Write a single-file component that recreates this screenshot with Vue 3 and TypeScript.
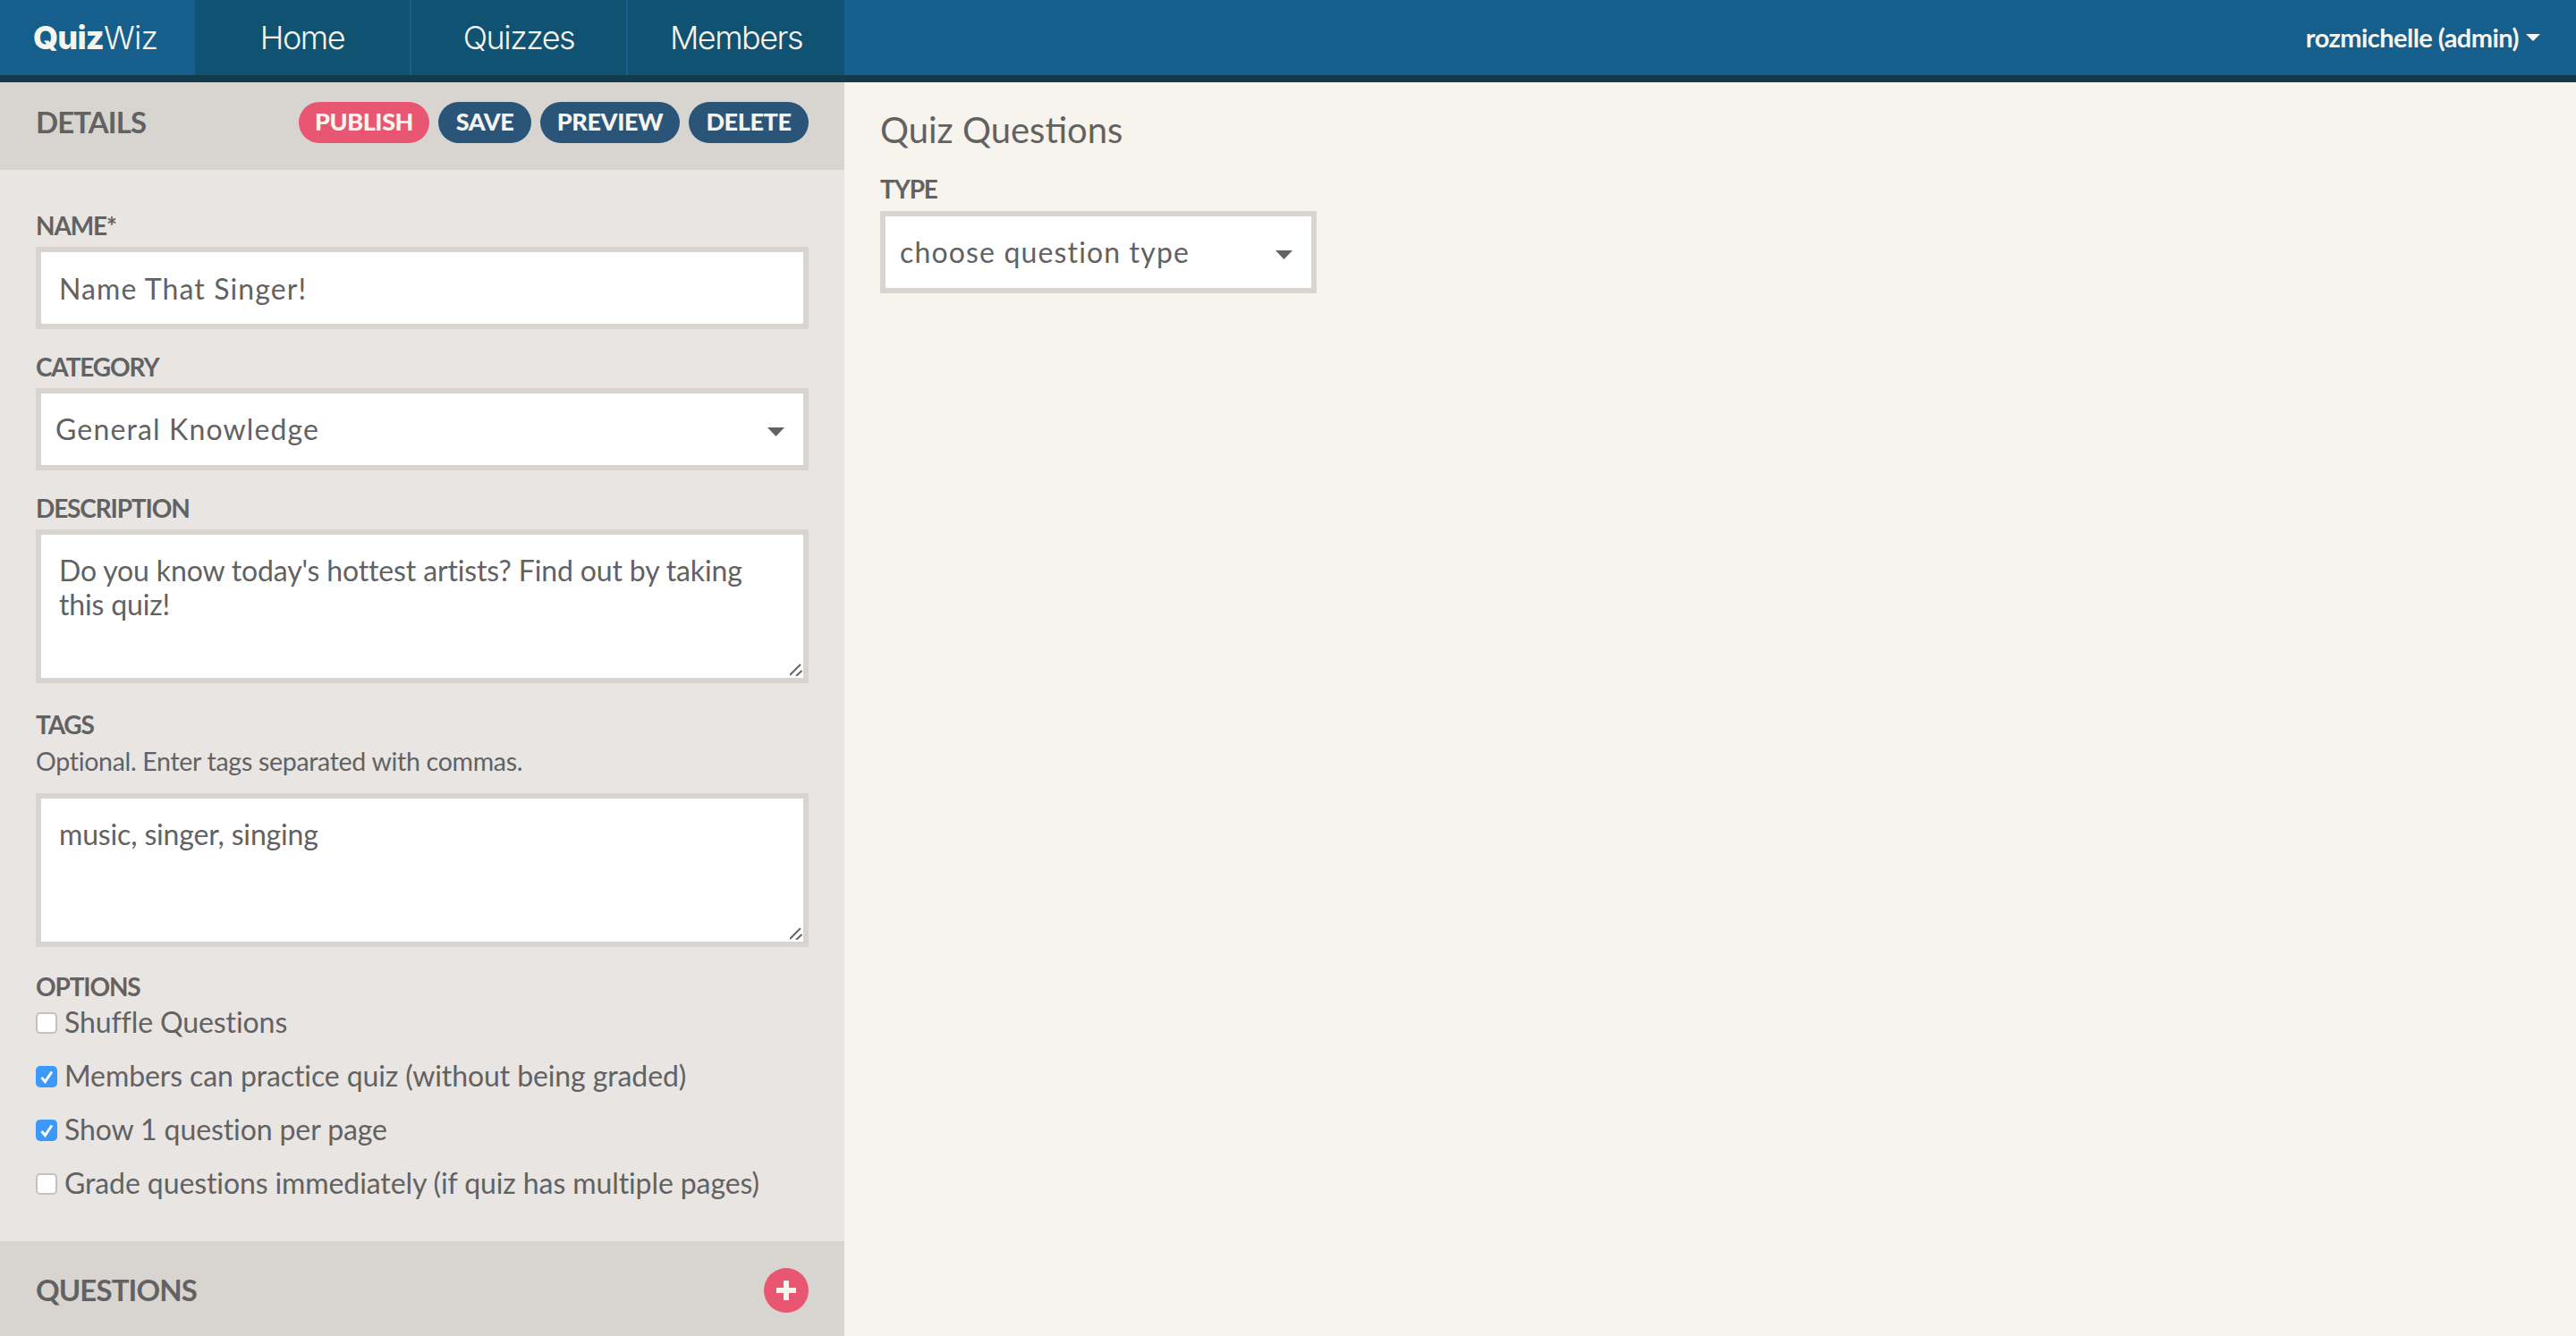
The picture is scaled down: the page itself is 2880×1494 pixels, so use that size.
<script setup lang="ts">
const tabs: string[] = ['Home', 'Quizzes', 'Members']
const actions = [
  { label: 'PUBLISH', cls: 'pink publish' },
  { label: 'SAVE', cls: 'navy save' },
  { label: 'PREVIEW', cls: 'navy preview' },
  { label: 'DELETE', cls: 'navy delete' },
]
const options = [
  { label: 'Shuffle Questions', on: false },
  { label: 'Members can practice quiz (without being graded)', on: true },
  { label: 'Show 1 question per page', on: true },
  { label: 'Grade questions immediately (if quiz has multiple pages)', on: false },
]
</script>

<template>
  <div class="page">
    <header class="nav">
      <div class="logo"><b>Quiz</b>Wiz</div>
      <a v-for="t in tabs" :key="t" class="tab">{{ t }}</a>
      <div class="user">rozmichelle (admin)<svg class="caret" viewBox="0 0 16 8"><path d="M0 0h16L8 8z" /></svg></div>
    </header>
    <div class="main">
      <aside class="side">
        <div class="bar top">
          <h2>DETAILS</h2>
          <div class="actions">
            <button v-for="a in actions" :key="a.label" class="pill" :class="a.cls">{{ a.label }}</button>
          </div>
        </div>
        <div class="form">
          <label class="lab first">NAME*</label>
          <input class="box text" value="Name That Singer!" />
          <label class="lab">CATEGORY</label>
          <div class="sel">
            <select class="box pick"><option>General Knowledge</option></select>
            <svg class="arrow" viewBox="0 0 19 10"><path d="M0 0h19L9.5 10z" /></svg>
          </div>
          <label class="lab">DESCRIPTION</label>
          <div class="sel">
            <textarea class="box area" spellcheck="false">Do you know today's hottest artists? Find out by taking this quiz!</textarea>
            <svg class="grip" viewBox="0 0 14 14"><path d="M12 1L0 13M13.5 8L7 14" /></svg>
          </div>
          <label class="lab tags">TAGS</label>
          <p class="hint">Optional. Enter tags separated with commas.</p>
          <div class="sel">
            <textarea class="box area" spellcheck="false">music, singer, singing</textarea>
            <svg class="grip" viewBox="0 0 14 14"><path d="M12 1L0 13M13.5 8L7 14" /></svg>
          </div>
          <label class="lab optlab">OPTIONS</label>
          <div class="opts">
            <div v-for="o in options" :key="o.label" class="opt">
              <span class="check" :class="{ on: o.on }">
                <svg v-if="o.on" viewBox="0 0 24 24"><path d="M6.5 13l4 4.5 7.5-11" /></svg>
              </span>
              <span class="opt-text">{{ o.label }}</span>
            </div>
          </div>
        </div>
        <div class="bar q">
          <h2>QUESTIONS</h2>
          <button class="plus"><svg viewBox="0 0 50 50"><path d="M25 14v22M14 25h22" /></svg></button>
        </div>
      </aside>
      <section class="content">
        <h1>Quiz Questions</h1>
        <label class="lab type">TYPE</label>
        <div class="sel narrow">
          <select class="box pick"><option>choose question type</option></select>
          <svg class="arrow" viewBox="0 0 19 10"><path d="M0 0h19L9.5 10z" /></svg>
        </div>
      </section>
    </div>
  </div>
</template>

<style scoped>
.page { height: 1494px; width: 2880px; overflow: hidden; display: flex; flex-direction: column; background: #f7f4ee; color: #626262; font-family: Lato, sans-serif; }
.nav { height: 84px; border-bottom: 8px solid #123a4a; box-sizing: content-box; background: #165f8c; display: flex; align-items: stretch; color: #f7f4ee; flex: none; }
.logo { width: 218px; box-sizing: border-box; padding-left: 37px; font: 300 36px/84px Inter, sans-serif; letter-spacing: -0.8px; }
.logo b { font-weight: 800; }
.tab { width: 240px; margin-right: 2px; background: #105271; text-align: center; font: 300 36px/84px Inter, sans-serif; letter-spacing: -1.5px; }
.tab:last-of-type { margin-right: 0; width: 242px; }
.user { margin-left: auto; padding-right: 40px; font-size: 29px; font-weight: 700; line-height: 84px; letter-spacing: -0.55px; display: flex; align-items: center; gap: 8px; }
.caret { width: 16px; height: 8px; fill: #f7f4ee; }
.main { flex: 1; display: flex; min-height: 0; }
.side { width: 944px; flex: none; background: #e8e5e2; display: flex; flex-direction: column; }
.bar { height: 98px; flex: none; box-sizing: border-box; background: #d8d5d0; padding: 0 40px; display: flex; align-items: center; justify-content: space-between; }
.bar.top { padding-bottom: 8px; }
.bar h2 { margin: 0; padding-bottom: 2px; font: 700 33px Lato, sans-serif; letter-spacing: -0.9px; }
.actions { display: flex; gap: 10px; }
.pill { height: 46px; padding: 0 0 3px; border: 0; border-radius: 23px; color: #f7f4ee; font: 900 27px Lato, sans-serif; letter-spacing: -0.4px; }
.publish { width: 146px; }
.save { width: 104px; }
.preview { width: 156px; }
.delete { width: 134px; }
.pink { background: #e95672; }
.navy { background: #2a5578; }
.form { flex: 1; padding: 0 40px; display: flex; flex-direction: column; }
.lab { display: block; height: 28px; margin: 29px 0 9px; font: 700 28px/26px Lato, sans-serif; letter-spacing: -1.15px; }
.lab.first { margin-top: 49px; }
.lab.tags { margin-top: 33px; }
.lab.optlab { margin-top: 31px; }
.box { display: block; width: 100%; box-sizing: border-box; height: 92px; border: 6px solid #d8d5d0; border-radius: 0; background: #fff; padding: 0 20px; color: #626262; font: 400 32px/38px Lato, sans-serif; outline: none; margin: 0; }
.text { letter-spacing: 1.1px; }
.pick { appearance: none; padding: 0 16px; letter-spacing: 1.15px; }
.area { height: 172px; padding: 21px 20px 0; resize: none; letter-spacing: -0.15px; }
.sel { position: relative; }
.arrow { position: absolute; right: 27px; top: 44px; width: 19px; height: 10px; fill: #626262; pointer-events: none; }
.grip { position: absolute; right: 7px; bottom: 8px; width: 14px; height: 14px; fill: none; stroke: #666; stroke-width: 2; pointer-events: none; }
.hint { margin: 1px 0 20px; font-size: 28.5px; line-height: 32px; letter-spacing: -0.3px; }
.opts { display: flex; flex-direction: column; gap: 22px; margin-top: -2px; }
.opt { display: flex; align-items: center; gap: 8px; height: 38px; font-size: 32px; letter-spacing: -0.1px; }
.opt-text { padding-bottom: 3px; }
.check { width: 24px; height: 24px; flex: none; box-sizing: border-box; border: 2px solid #c4c2c0; border-radius: 5px; background: #fff; }
.check.on { background: #3b99fc; border: 0; }
.check svg { display: block; width: 24px; height: 24px; fill: none; stroke: #fff; stroke-width: 3; }
.q { height: 106px; padding-top: 4px; }
.plus { width: 50px; height: 50px; padding: 0; border: 0; border-radius: 50%; background: #e95672; }
.plus svg { display: block; width: 50px; height: 50px; fill: none; stroke: #f7f4ee; stroke-width: 6; }
.content { flex: 1; padding: 0 40px; }
.content h1 { margin: 29px 0 0; font: 400 40px/48px Lato, sans-serif; }
.lab.type { margin: 29px 0 10px; }
.narrow { width: 488px; }
</style>
